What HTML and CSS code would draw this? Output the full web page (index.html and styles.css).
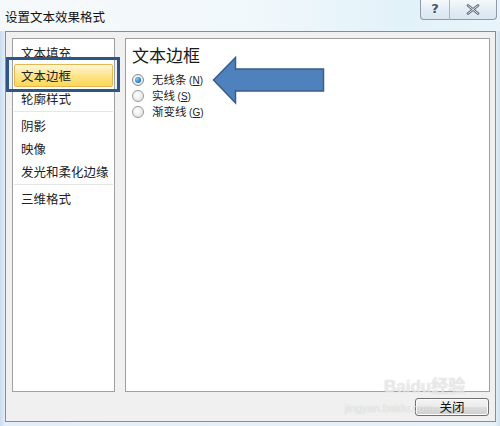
FILE: index.html
```html
<!DOCTYPE html>
<html lang="zh">
<head>
<meta charset="utf-8">
<title>设置文本效果格式</title>
<link rel="stylesheet" href="styles.css">
</head>
<body>
<div class="window">
  <div class="titlebar">
    <span class="title">设置文本效果格式</span>
    <div class="caption-btns">
      <div class="cap-btn help">?</div>
      <div class="cap-btn close-x">
        <svg width="14" height="11" viewBox="0 0 14 11"><path d="M2 1.5 L12 9.5 M12 1.5 L2 9.5" stroke="#5a6472" stroke-width="2.6" stroke-linecap="round"/><path d="M2 1.5 L12 9.5 M12 1.5 L2 9.5" stroke="#f4f6f8" stroke-width="0.9" stroke-linecap="round"/></svg>
      </div>
    </div>
  </div>
  <div class="frame">
    <div class="client">
      <div class="panes">
        <ul class="nav">
          <li class="item">文本填充</li>
          <li class="item selected">文本边框</li>
          <li class="item">轮廓样式</li>
          <li class="sep"></li>
          <li class="item">阴影</li>
          <li class="item">映像</li>
          <li class="item">发光和柔化边缘</li>
          <li class="sep"></li>
          <li class="item">三维格式</li>
        </ul>
        <div class="content">
          <div class="heading">文本边框</div>
          <div class="radios">
            <label class="radio-row"><span class="radio checked"></span><span class="lbl">无线条 <span class="key">(<u>N</u>)</span></span></label>
            <label class="radio-row"><span class="radio"></span><span class="lbl">实线 <span class="key">(<u>S</u>)</span></span></label>
            <label class="radio-row"><span class="radio"></span><span class="lbl">渐变线 <span class="key">(<u>G</u>)</span></span></label>
          </div>
        </div>
      </div>
      <div class="footer">
        <div class="btn">关闭</div>
      </div>
    </div>
  </div>
  <div class="annot-box"></div>
  <svg class="annot-arrow" width="114" height="50" viewBox="0 0 114 50">
    <polygon points="1.5,24 23.5,1.5 23.5,13 111.5,13 111.5,35 23.5,35 23.5,47" fill="#4f81bd" stroke="#385d8a" stroke-width="1.5" stroke-linejoin="miter"/>
  </svg>
  <div class="wm-main">Bai<span class="paw">du</span>经验</div>
  <div class="wm-sub">jingyan.baidu.com</div>
</div>
</body>
</html>
```

FILE: styles.css
```css
* { box-sizing: border-box; }
html, body { margin: 0; padding: 0; }
body {
  width: 500px;
  height: 426px;
  overflow: hidden;
  font-family: "Noto Sans CJK SC", "Noto Sans", sans-serif;
  font-size: 12.5px;
  color: #1e1e1e;
}
.window {
  position: relative;
  width: 500px;
  height: 426px;
  display: flex;
  flex-direction: column;
  background: linear-gradient(to right, #c9dcef 0, #e4eef8 5px, #e6f1f8 495px, #cfe0ef 500px);
}
.titlebar {
  height: 31px;
  display: flex;
  align-items: flex-start;
  padding: 0 3px 0 5px;
  background: linear-gradient(to right, #f6f9fb 0%, #f1f8fb 50%, #e2f2f9 80%, #e8f4fa 100%);
}
.title {
  margin-top: 9px;
  font-size: 12.5px;
  line-height: 16px;
  color: #111;
}
.caption-btns {
  margin-left: auto;
  display: flex;
  height: 20px;
}
.cap-btn {
  height: 20px;
  border: 1px solid #8d9aab;
  border-top: none;
  background: linear-gradient(#f5f9fc, #e3ecf4 55%, #dbe6f0);
  display: flex;
  align-items: center;
  justify-content: center;
}
.help {
  width: 29px;
  border-right: none;
  border-bottom-left-radius: 4px;
  font-family: "DejaVu Sans", sans-serif;
  font-weight: bold;
  font-size: 13px;
  color: #4d5663;
  line-height: 1;
  padding-bottom: 2px;
}
.close-x {
  width: 48px;
  border-bottom-right-radius: 4px;
  border-left: 1px solid #aab5c2;
}
.frame {
  flex: 1;
  padding: 0 4px 4px 5px;
  display: flex;
}
.client {
  flex: 1;
  border: 1px solid #8c8c8c;
  background: #f0f0f0;
  padding: 6px 5px 5px 6px;
  display: flex;
  flex-direction: column;
}
.panes {
  height: 354px;
  display: flex;
  gap: 10px;
}
.nav {
  list-style: none;
  margin: 0;
  padding: 2px 0 0 0;
  width: 103px;
  background: #fff;
  border: 1px solid #a0a0a0;
}
.item {
  height: 23px;
  line-height: 23px;
  padding-left: 7px;
  margin: 0 1px;
  white-space: nowrap;
  color: #222;
}
.item.selected {
  border: 1px solid #e3b854;
  border-radius: 2px;
  background: linear-gradient(#fff7d8 0%, #fde48a 50%, #fcd856 100%);
  line-height: 21px;
  padding-left: 6px;
}
.sep {
  height: 4px;
  margin: 0 1px;
  background: linear-gradient(transparent 1px, #e6e6e6 1px, #e6e6e6 2px, transparent 2px);
}
.content {
  flex: 1;
  background: #fff;
  border: 1px solid #a0a0a0;
  padding: 6px 6px 0 6px;
}
.heading {
  font-size: 17px;
  line-height: 20px;
  color: #1a1a1a;
}
.radios {
  margin-top: 7px;
  display: flex;
  flex-direction: column;
}
.radio-row {
  height: 16px;
  display: flex;
  align-items: center;
  gap: 8px;
}
.radio {
  width: 12px;
  height: 12px;
  border-radius: 50%;
  border: 1px solid #9a9a9a;
  background: radial-gradient(circle at 40% 40%, #ffffff 0, #f0f0f0 45%, #d8d8d8 100%);
  display: flex;
  align-items: center;
  justify-content: center;
}
.radio.checked {
  border-color: #8a8a8a;
}
.radio.checked::after {
  content: "";
  width: 6px;
  height: 6px;
  border-radius: 50%;
  background: radial-gradient(circle at 35% 35%, #8fd0f5 0, #2a8ad4 55%, #13518e 100%);
}
.lbl {
  font-size: 11.5px;
  line-height: 16px;
  color: #222;
}
.key {
  font-family: "Liberation Sans", sans-serif;
  font-size: 10px;
}
.footer {
  margin-top: 6px;
  display: flex;
  justify-content: flex-end;
  padding-right: 1px;
}
.btn {
  width: 74px;
  height: 18px;
  border: 1px solid #707070;
  border-radius: 3px;
  background: linear-gradient(#f4f4f4 0%, #ebebeb 48%, #dddddd 52%, #cfcfcf 100%);
  box-shadow: inset 0 0 0 1px #fcfcfc;
  display: flex;
  align-items: center;
  justify-content: center;
  font-size: 12.5px;
  line-height: 1;
  color: #111;
}
.annot-box {
  position: absolute;
  left: 6px;
  top: 57px;
  width: 114px;
  height: 35px;
  border: 3px solid #2d5686;
}
.annot-arrow {
  position: absolute;
  left: 212px;
  top: 56px;
}
.wm-main {
  position: absolute;
  left: 384px;
  top: 377px;
  font-family: "Liberation Sans", "Noto Sans CJK SC", sans-serif;
  font-size: 17px;
  font-weight: bold;
  line-height: 20px;
  color: rgba(255, 255, 255, 0.6);
  text-shadow: 0 0 1px rgba(150, 150, 150, 0.55);
  pointer-events: none;
}
.wm-sub {
  position: absolute;
  left: 345px;
  top: 402px;
  font-family: "Liberation Sans", sans-serif;
  font-size: 11px;
  line-height: 12px;
  color: rgba(255, 255, 255, 0.6);
  text-shadow: 0 0 1px rgba(150, 150, 150, 0.5);
  pointer-events: none;
}
```
